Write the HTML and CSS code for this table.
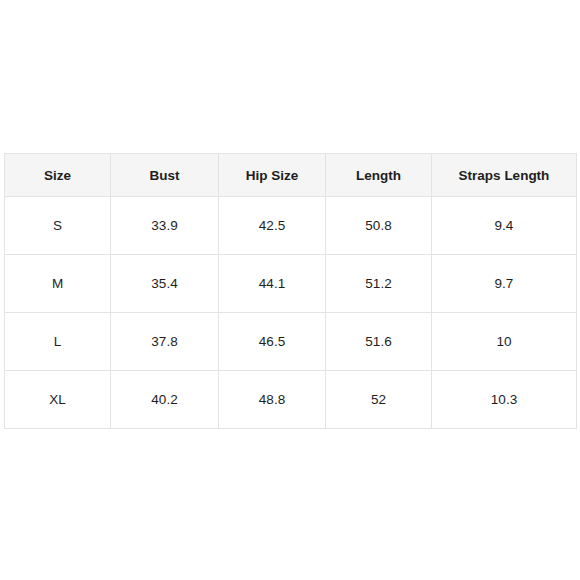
FILE: index.html
```html
<!DOCTYPE html>
<html>
<head>
<meta charset="utf-8">
<link rel="stylesheet" href="styles.css">
</head>
<body>
<div class="page">
  <table class="sizes">
    <colgroup>
      <col class="c1"><col class="c2"><col class="c3"><col class="c4"><col class="c5">
    </colgroup>
    <thead>
      <tr><th>Size</th><th>Bust</th><th>Hip Size</th><th>Length</th><th>Straps Length</th></tr>
    </thead>
    <tbody>
      <tr><td>S</td><td>33.9</td><td>42.5</td><td>50.8</td><td>9.4</td></tr>
      <tr><td>M</td><td>35.4</td><td>44.1</td><td>51.2</td><td>9.7</td></tr>
      <tr><td>L</td><td>37.8</td><td>46.5</td><td>51.6</td><td>10</td></tr>
      <tr><td>XL</td><td>40.2</td><td>48.8</td><td>52</td><td>10.3</td></tr>
    </tbody>
  </table>
</div>
</body>
</html>
```
FILE: styles.css
```css
html, body {
  margin: 0;
  padding: 0;
  background: #ffffff;
}
.page {
  width: 580px;
  height: 580px;
  padding-top: 153px;
  padding-left: 4px;
  box-sizing: border-box;
}
.sizes {
  border-collapse: collapse;
  table-layout: fixed;
  width: 572px;
  font-family: "Liberation Sans", Arial, sans-serif;
  font-size: 13.5px;
  color: #1e1e1e;
}
.c1 { width: 106px; }
.c2 { width: 108px; }
.c3 { width: 107px; }
.c4 { width: 106px; }
.c5 { width: 145px; }
.sizes th, .sizes td {
  border: 1px solid #e3e3e3;
  text-align: center;
  vertical-align: middle;
  padding: 0;
}
.sizes th {
  height: 42px;
  background: #f5f5f5;
  font-weight: bold;
}
.sizes td {
  height: 57px;
}
```
